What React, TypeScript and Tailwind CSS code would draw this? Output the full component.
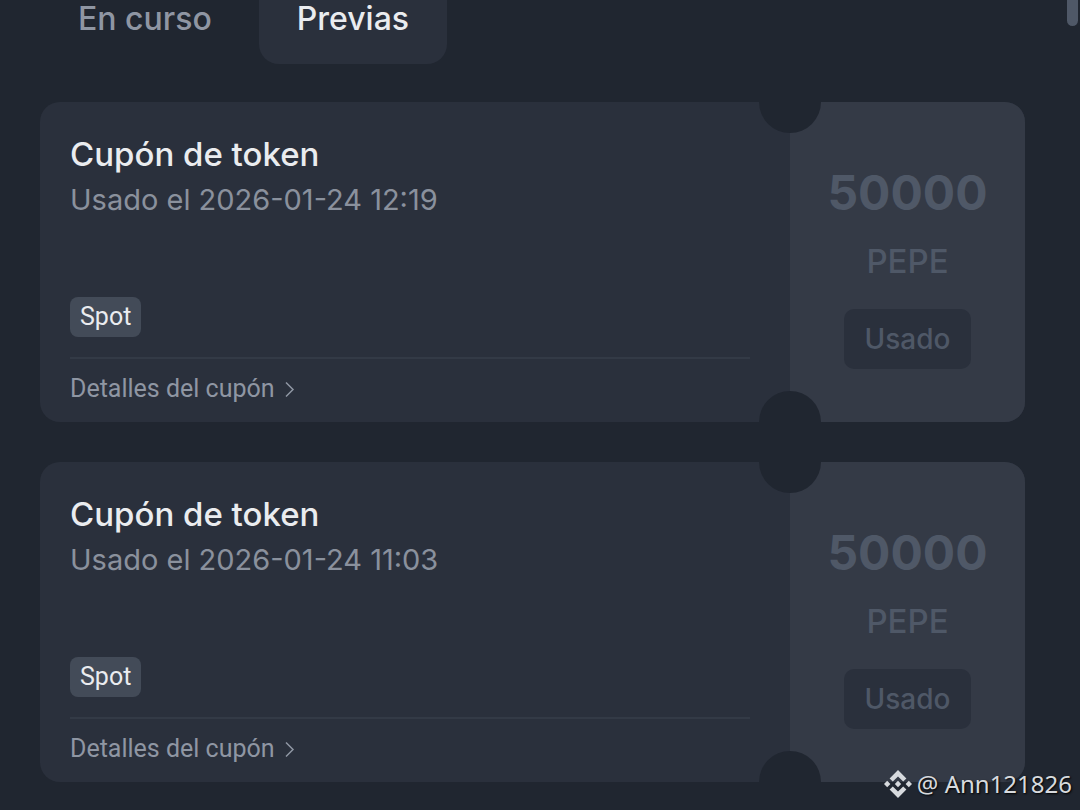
interface Coupon {
  id: number;
  title: string;
  usedAt: string;
  tag: string;
  amount: string;
  token: string;
}

const coupons: Coupon[] = [
  { id: 1, title: 'Cupón de token', usedAt: '2026-01-24 12:19', tag: 'Spot', amount: '50000', token: 'PEPE' },
  { id: 2, title: 'Cupón de token', usedAt: '2026-01-24 11:03', tag: 'Spot', amount: '50000', token: 'PEPE' },
];

const Tabs = () => (
  <nav className="flex gap-[9px] text-[32px] leading-[38px] font-medium">
    <button type="button" className="h-16 rounded-b-[20px] px-[38px] pb-[26px] text-[#8f96a3]">
      En curso
    </button>
    <button type="button" className="h-16 rounded-b-[20px] bg-[#2a303c] px-[38px] pb-[26px] text-[#eaecef]">
      Previas
    </button>
  </nav>
);

const CouponCard = ({ title, usedAt, tag, amount, token }: Coupon) => (
  <article className="flex min-h-80 overflow-hidden rounded-[20px] bg-[#2a303c]">
    <div className="flex flex-1 flex-col pl-[30px] pr-10">
      <h2 className="mt-8 text-[33px] leading-10 font-medium text-[#eaecef]">{title}</h2>
      <p className="mt-2 text-[29px] leading-9 text-[#8a919d]">Usado el {usedAt}</p>
      <span className="mt-auto self-start rounded-lg bg-[#434b58] px-[10px] font-['Roboto',sans-serif] text-[25px] leading-10 text-[#eaecef]">
        {tag}
      </span>
      <div className="mt-5 border-t-2 border-[#333a46] pb-1">
        <a href="#detalles" className="flex h-[59px] items-center gap-[10px] font-['Roboto',sans-serif] text-[25px] text-[#8f96a3]">
          Detalles del cupón
          <svg width="10" height="16" viewBox="0 0 10 16" fill="none" stroke="currentColor" strokeWidth="1.5" aria-hidden="true">
            <path d="M1 1.5l7 7-7 7" />
          </svg>
        </a>
      </div>
    </div>

    {/* the two notches sit on the seam between the parts */}
    <div className="relative flex w-[235px] flex-col items-center bg-[#343a46] text-[#4f5867]">
      <span className="absolute -top-[31px] -left-[31px] size-[62px] rounded-full bg-[#202630]" />
      <span className="absolute -bottom-[31px] -left-[31px] size-[62px] rounded-full bg-[#202630]" />
      <strong className="mt-[61px] text-[48px] leading-[60px] font-bold">{amount}</strong>
      <span className="mt-[18px] text-[33px] leading-10 font-medium">{token}</span>
      <button type="button" disabled className="mt-7 h-[60px] rounded-[10px] bg-[#2a303c] px-[21px] text-[28px] font-medium">
        Usado
      </button>
    </div>
  </article>
);

const Watermark = () => (
  <div className="absolute right-2 bottom-2 flex items-center gap-[5px] font-['Noto_Sans',sans-serif] text-2xl leading-9 text-[#d7dade] [text-shadow:1px_1px_2px_#000]">
    <svg width="28" height="28" viewBox="0 0 28 28" fill="currentColor" aria-hidden="true">
      <path d="M14 0l8.4 8.4-3.2 3.2L14 6.4l-5.2 5.2-3.2-3.2z" />
      <path d="M14 28l8.4-8.4-3.2-3.2-5.2 5.2-5.2-5.2-3.2 3.2z" />
      <path d="M14 10.8l3.2 3.2-3.2 3.2-3.2-3.2z" />
      <path d="M3.2 10.8L6.4 14l-3.2 3.2L0 14z" />
      <path d="M24.8 10.8L28 14l-3.2 3.2-3.2-3.2z" />
    </svg>
    <span>@ Ann121826</span>
  </div>
);

export default function App() {
  return (
    <div className="relative min-h-screen overflow-hidden bg-[#202630] pr-[55px] pb-7 pl-10 font-['Inter',sans-serif]">
      <Tabs />
      <main className="mt-[38px] flex flex-col gap-10">
        {coupons.map((coupon) => (
          <CouponCard key={coupon.id} {...coupon} />
        ))}
      </main>
      <div className="absolute top-0 right-[2px] h-[26px] w-[11px] rounded-b-full bg-[#4f5867]" />
      <Watermark />
    </div>
  );
}
